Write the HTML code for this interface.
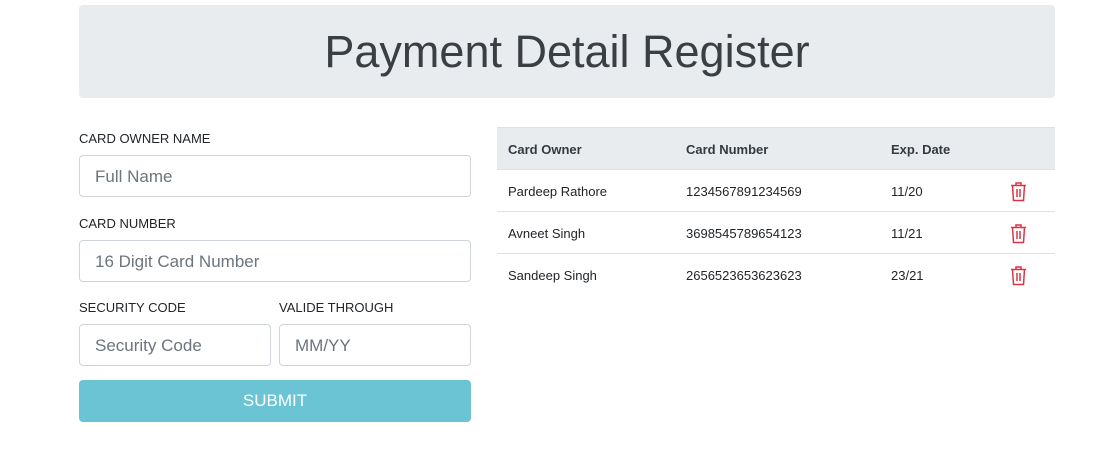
<!DOCTYPE html>
<html><head><style>
body{margin:0;width:1120px;height:457px;background:#fff;font-family:"Liberation Sans",sans-serif;color:#212529;position:relative;overflow:hidden}
.a{position:absolute}
.jb{left:79px;top:5px;width:976px;height:93px;background:#e9ecef;border-radius:4px;text-align:center;font-size:45px;font-weight:300;line-height:93px;color:#3a3f44}
.lbl{font-size:13px;color:#212529}
.in{box-sizing:border-box;border:1px solid #ced4da;border-radius:4px;height:42px;font-size:17px;color:#6c757d;padding-left:15px;line-height:42px}
.btn{left:79px;top:380px;width:392px;height:42px;background:#6ac4d3;border-radius:4px;color:#fff;font-size:17px;text-align:center;line-height:42px}
.th{left:497px;top:127px;width:558px;height:42px;background:#e9ecef;border-top:1px solid #dee2e6;box-sizing:border-box}
.c{font-size:13px;position:absolute}
.b{font-weight:bold;color:#343a40}
.row{left:497px;width:558px;height:42px;border-top:1px solid #dee2e6;box-sizing:border-box}
</style></head><body>
<div class="a jb">Payment Detail Register</div>
<div class="a lbl" style="left:79px;top:131px">CARD OWNER NAME</div>
<div class="a in" style="left:79px;top:155px;width:392px">Full Name</div>
<div class="a lbl" style="left:79px;top:216px">CARD NUMBER</div>
<div class="a in" style="left:79px;top:240px;width:392px">16 Digit Card Number</div>
<div class="a lbl" style="left:79px;top:300px">SECURITY CODE</div>
<div class="a lbl" style="left:279px;top:300px">VALIDE THROUGH</div>
<div class="a in" style="left:79px;top:324px;width:192px">Security Code</div>
<div class="a in" style="left:279px;top:324px;width:192px">MM/YY</div>
<div class="a btn">SUBMIT</div>
<div class="a th">
<span class="c b" style="left:11px;top:14px">Card Owner</span>
<span class="c b" style="left:189px;top:14px">Card Number</span>
<span class="c b" style="left:394px;top:14px">Exp. Date</span>
</div>
<div class="a row" style="top:169px">
<span class="c" style="left:11px;top:14px">Pardeep Rathore</span><span class="c" style="left:189px;top:14px">1234567891234569</span><span class="c" style="left:394px;top:14px">11/20</span>
<svg class="a" style="left:512px;top:11px" width="19" height="21" viewBox="0 0 19 21" fill="none" stroke="#dc3545" stroke-width="1.5"><path d="M2 4.5h15M7 4.5V2h5v2.5M3.5 4.5l1 15h10l1-15M8 8v8M11 8v8"/></svg>
</div>
<div class="a row" style="top:211px">
<span class="c" style="left:11px;top:14px">Avneet Singh</span><span class="c" style="left:189px;top:14px">3698545789654123</span><span class="c" style="left:394px;top:14px">11/21</span>
<svg class="a" style="left:512px;top:11px" width="19" height="21" viewBox="0 0 19 21" fill="none" stroke="#dc3545" stroke-width="1.5"><path d="M2 4.5h15M7 4.5V2h5v2.5M3.5 4.5l1 15h10l1-15M8 8v8M11 8v8"/></svg>
</div>
<div class="a row" style="top:253px">
<span class="c" style="left:11px;top:14px">Sandeep Singh</span><span class="c" style="left:189px;top:14px">2656523653623623</span><span class="c" style="left:394px;top:14px">23/21</span>
<svg class="a" style="left:512px;top:11px" width="19" height="21" viewBox="0 0 19 21" fill="none" stroke="#dc3545" stroke-width="1.5"><path d="M2 4.5h15M7 4.5V2h5v2.5M3.5 4.5l1 15h10l1-15M8 8v8M11 8v8"/></svg>
</div>
</body></html>
